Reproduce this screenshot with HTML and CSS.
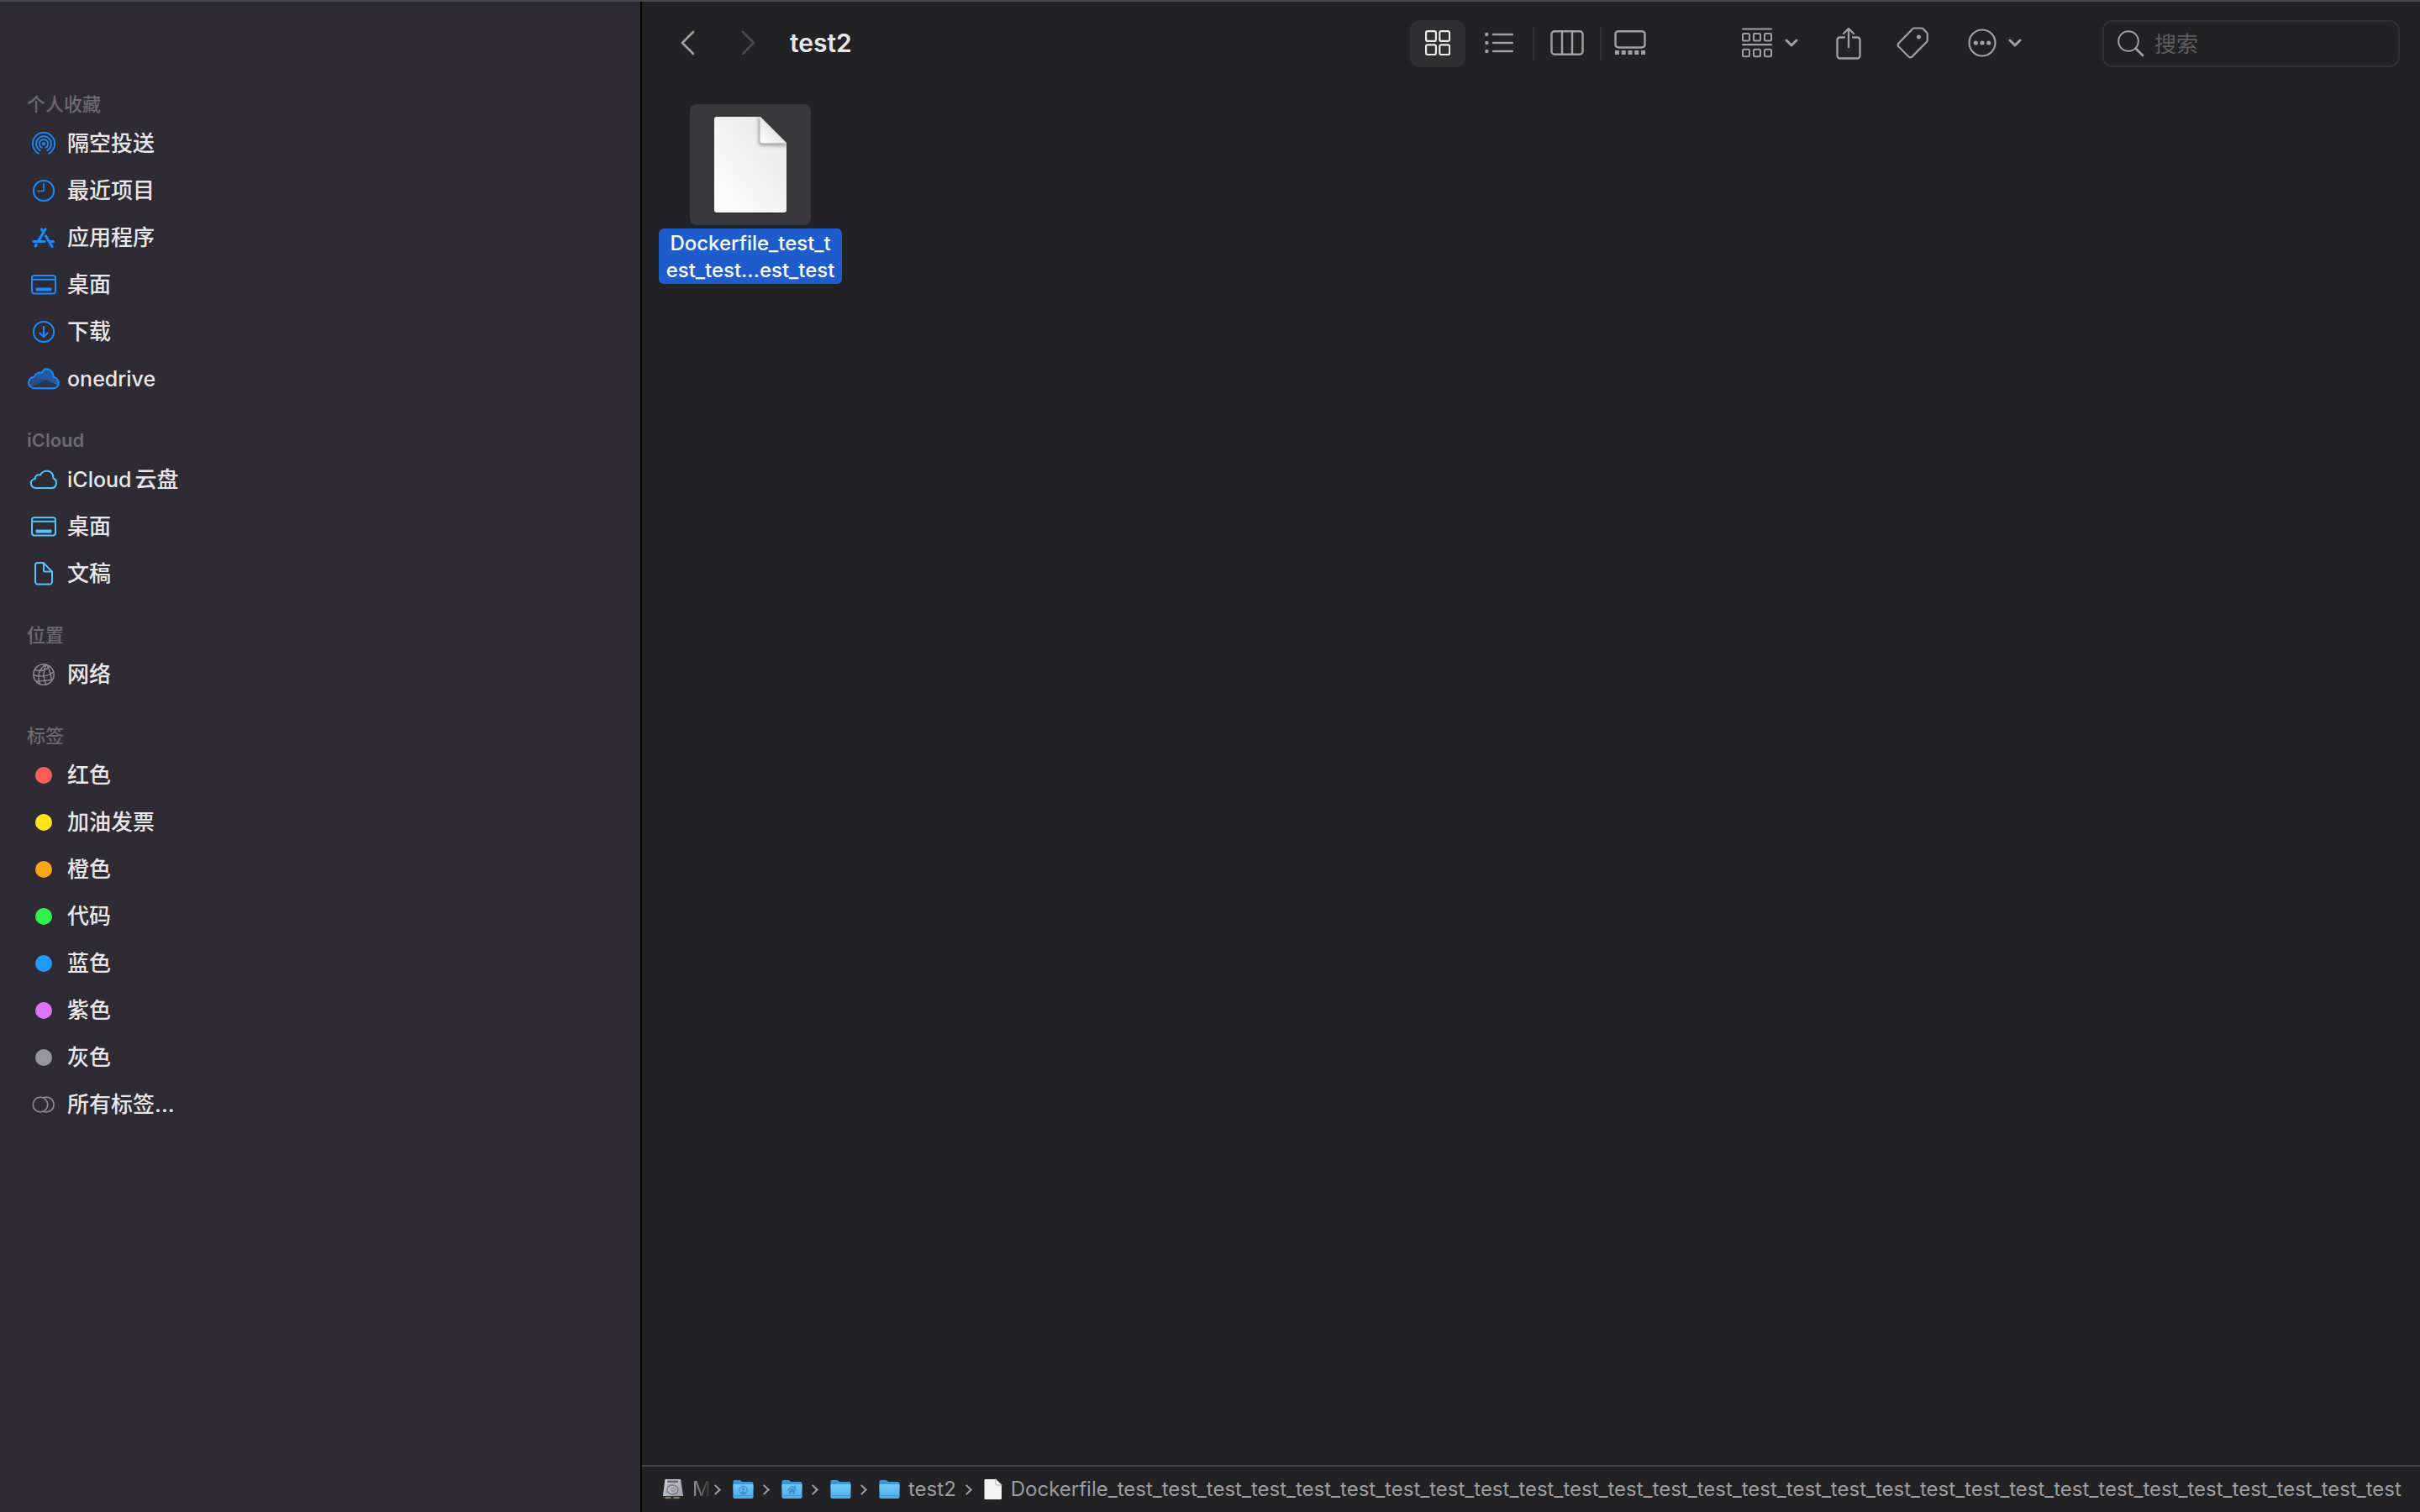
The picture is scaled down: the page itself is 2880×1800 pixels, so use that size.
FILE: index.html
```html
<!DOCTYPE html>
<html lang="zh-CN">
<head>
<meta charset="utf-8">
<meta name="viewport" content="width=device-width, initial-scale=1">
<title>test2</title>
<link rel="stylesheet" href="styles.css">
</head>
<body>
<svg class="defs" aria-hidden="true">
  <defs>
    <linearGradient id="folder-front" x1="0" y1="0" x2="0" y2="1">
      <stop offset="0" stop-color="#70cbfb"/><stop offset="1" stop-color="#4dabe6"/>
    </linearGradient>
    <linearGradient id="paper" x1="0" y1="1" x2="1" y2="0">
      <stop offset="0" stop-color="#ffffff"/><stop offset="1" stop-color="#e6e6e6"/>
    </linearGradient>
    <linearGradient id="fold" x1="0" y1="1" x2="0.7" y2="0.3">
      <stop offset="0" stop-color="#ffffff"/><stop offset="1" stop-color="#dedede"/>
    </linearGradient>
    <linearGradient id="disk" x1="0" y1="0" x2="1" y2="1">
      <stop offset="0" stop-color="#d0d7dc"/><stop offset="1" stop-color="#939ba1"/>
    </linearGradient>
    <filter id="fold-shadow" x="-50%" y="-50%" width="200%" height="200%">
      <feGaussianBlur stdDeviation="2"/>
    </filter>
    <clipPath id="page-clip"><path d="M3 1H55L86 32V112a3 3 0 0 1-3 3H3a3 3 0 0 1-3-3V4a3 3 0 0 1 3-3Z"/></clipPath>
    <symbol id="folder" viewBox="0 0 25 24">
      <path d="M.5 3q0-2 2-2H8q1 0 2 1t2 1H22.500q2 0 2 2V12H.5Z" fill="#3d97d3" stroke="none"/>
      <path d="M.5 7q0-1 1-1H23.500q1 0 1 1V21q0 2-2 2H2.500q-2 0-2-2Z" fill="url(#folder-front)" stroke="none"/>
      <path d="M.5 19.500H24.500" stroke="#3b96d2" stroke-width="1"/>
    </symbol>
    <symbol id="desktop" viewBox="0 0 30 24">
      <rect x="1" y="1" width="28" height="21.500" rx="3"/>
      <path d="M1 5.700H29"/>
      <rect x="5.500" y="15.500" width="19" height="4" rx="1" fill="currentColor" stroke="none"/>
    </symbol>
    <symbol id="small-chevron" viewBox="0 0 16 10">
      <path d="M2 2L8 8L14 2" stroke-width="3"/>
    </symbol>
  </defs>
</svg>

<div class="window">
  <nav class="sidebar" aria-label="边栏">
    <section class="group">
      <h2>个人收藏</h2>
      <ul>
        <li><a href="#airdrop"><span class="glyph"><svg width="28" height="28" viewBox="0 0 28 28"><path d="M7.800 25.600A13.100 13.100 0 1 1 20.200 25.600M9.700 22.100A9 9 0 1 1 18.300 22.100M11.500 18.700A5.200 5.200 0 1 1 16.500 18.700" stroke-width="1.800"/><circle cx="14" cy="14.200" r="2" fill="currentColor" stroke="none"/></svg></span>隔空投送</a></li>
        <li><a href="#recents"><span class="glyph"><svg width="28" height="28" viewBox="0 0 28 28"><circle cx="14" cy="14" r="12.100"/><path d="M14 6V14.500H7" stroke-width="1.600"/></svg></span>最近项目</a></li>
        <li><a href="#applications"><span class="glyph"><svg width="28" height="28" viewBox="0 0 28 28"><path d="M16 4L8 17.500M11.500 4L14 8.300M16.500 12L24 24.500M1.800 18.500H15M22 18.500H25.500M5.200 22.500L4.200 24" stroke-width="3.200"/></svg></span>应用程序</a></li>
        <li><a href="#desktop-folder"><span class="glyph"><svg width="30" height="24"><use href="#desktop"/></svg></span>桌面</a></li>
        <li><a href="#downloads"><span class="glyph"><svg width="28" height="28" viewBox="0 0 28 28"><circle cx="14" cy="14" r="12.100"/><path d="M14 8V19.500M9.500 15.500L14 20L18.500 15.500"/></svg></span>下载</a></li>
        <li><a href="#onedrive"><span class="glyph"><svg width="38" height="28" viewBox="0 0 38 28"><path d="M8.500 25.300C-1.500 25-1 12.500 7.500 11.700C9 7 14 5.500 17 7C18 -.5 29.500 .5 31 12C39 13.500 38.500 25.300 30.500 25.300Z" fill="#235ca6" stroke="none"/><path d="M1.500 20C0 15 4 11.700 8 11.700L21.500 15L4 23.500Z" fill="#264f88" stroke="none"/><path d="M4.500 23.500L21.500 15L35.500 21.500Q33.500 25 30 25.300H8.500Q6 25 4.500 23.500Z" fill="#28374f" stroke="none"/><path d="M8.500 25.300C-1.500 25-1 12.500 7.500 11.700C9 7 14 5.500 17 7C18 -.5 29.500 .5 31 12C39 13.500 38.500 25.300 30.500 25.300Z" stroke-width="1.900"/></svg></span><span class="latin">onedrive</span></a></li>
      </ul>
    </section>
    <section class="group cloud">
      <h2>iCloud</h2>
      <ul>
        <li><a href="#icloud-drive"><span class="glyph"><svg width="32" height="24" viewBox="0 0 32 24"><path d="M7.500 22C-1 21.500-1 11.500 6 11C5.500 7.500 8.500 5.500 12 6.500C15-.5 27.500-.5 27.500 10.500C33 12.500 31.500 22 25.500 22Z"/></svg></span><span><span class="latin spaced">iCloud</span>云盘</span></a></li>
        <li><a href="#icloud-desktop"><span class="glyph"><svg width="30" height="24"><use href="#desktop"/></svg></span>桌面</a></li>
        <li><a href="#documents"><span class="glyph"><svg width="22" height="28" viewBox="0 0 22 28"><path d="M4 1H10.500L21 11.500V23.500a3 3 0 0 1-3 3H4a3 3 0 0 1-3-3V4a3 3 0 0 1 3-3ZM11 1.500V10a1.500 1.500 0 0 0 1.500 1.500H20.500"/></svg></span>文稿</a></li>
      </ul>
    </section>
    <section class="group places">
      <h2>位置</h2>
      <ul>
        <li><a href="#network"><span class="glyph"><svg width="28" height="28" viewBox="0 0 28 28"><g stroke-width="1.500"><circle cx="14" cy="14" r="12.200"/><path d="M3.500 8.500Q13 12 21.500 4.500M2 14.500Q14 19 26 11M5 22Q14 22 24 20M17 2Q5 9 9 25M17 2Q11 14 17 26M17 2Q22 8 23.500 21"/></g></svg></span>网络</a></li>
      </ul>
    </section>
    <section class="group places">
      <h2>标签</h2>
      <ul>
        <li><a href="#red"><span class="glyph"><i class="dot red"></i></span>红色</a></li>
        <li><a href="#yellow"><span class="glyph"><i class="dot yellow"></i></span>加油发票</a></li>
        <li><a href="#orange"><span class="glyph"><i class="dot orange"></i></span>橙色</a></li>
        <li><a href="#green"><span class="glyph"><i class="dot green"></i></span>代码</a></li>
        <li><a href="#blue"><span class="glyph"><i class="dot blue"></i></span>蓝色</a></li>
        <li><a href="#purple"><span class="glyph"><i class="dot purple"></i></span>紫色</a></li>
        <li><a href="#gray"><span class="glyph"><i class="dot gray"></i></span>灰色</a></li>
        <li><a href="#all-tags"><span class="glyph"><svg width="28" height="20" viewBox="0 0 28 20"><circle cx="10" cy="10" r="8.800" stroke-width="1.700"/><path d="M14 1.800A8.800 8.800 0 1 1 14 18.200" stroke-width="1.700"/></svg></span>所有标签...</a></li>
      </ul>
    </section>
  </nav>

  <div class="browser">
    <header class="toolbar">
      <div class="history">
        <button type="button" aria-label="返回"><svg width="18" height="30" viewBox="0 0 18 30"><path d="M16 2L3 15L16 28" stroke-width="2.600"/></svg></button>
        <button type="button" aria-label="前进" disabled><svg width="18" height="30" viewBox="0 0 18 30"><path d="M2 2L15 15L2 28" stroke-width="2.600"/></svg></button>
      </div>
      <h1>test2</h1>
      <div class="tools">
        <div class="views">
          <button type="button" class="view-icons" aria-label="图标" aria-pressed="true"><svg width="30" height="30" viewBox="0 0 30 30"><g stroke-width="2.200"><rect x="1.100" y="1.100" width="11.800" height="11.800" rx="2"/><rect x="17.300" y="1.100" width="11.800" height="11.800" rx="2"/><rect x="1.100" y="17.300" width="11.800" height="11.800" rx="2"/><rect x="17.300" y="17.300" width="11.800" height="11.800" rx="2"/></g></svg></button>
          <button type="button" class="view-list" aria-label="列表"><svg width="34" height="26" viewBox="0 0 34 26"><path d="M10 3H33M10 13H33M10 23H33" stroke-width="2.400"/><g fill="currentColor" stroke="none"><circle cx="2.300" cy="3" r="2.200"/><circle cx="2.300" cy="13" r="2.200"/><circle cx="2.300" cy="23" r="2.200"/></g></svg></button>
          <button type="button" class="view-columns" aria-label="分栏"><svg width="40" height="30" viewBox="0 0 40 30"><rect x="1.500" y="1.200" width="37" height="27.600" rx="3.500" stroke-width="2.400"/><path d="M14 1V29M26 1V29" stroke-width="2.400"/></svg></button>
          <button type="button" class="view-gallery" aria-label="画廊"><svg width="38" height="30" viewBox="0 0 38 30"><rect x="1.500" y="1.200" width="35" height="19.300" rx="3.500" stroke-width="2.500"/><path d="M1 26.500H37" stroke-width="5" stroke-dasharray="5 2.750" stroke-linecap="butt"/></svg></button>
        </div>
        <button type="button" class="menu-button" aria-label="分组"><svg width="38" height="36" viewBox="0 0 38 36"><path d="M2 1.500H36M2 20.200H36" stroke-width="2.200"/><g stroke-width="2"><rect x="2" y="7" width="8" height="8.500" rx="1.500"/><rect x="15" y="7" width="8" height="8.500" rx="1.500"/><rect x="28" y="7" width="8" height="8.500" rx="1.500"/><rect x="2" y="25.700" width="8" height="8.500" rx="1.500"/><rect x="15" y="25.700" width="8" height="8.500" rx="1.500"/><rect x="28" y="25.700" width="8" height="8.500" rx="1.500"/></g></svg><svg width="16" height="10"><use href="#small-chevron"/></svg></button>
        <button type="button" class="tool" aria-label="共享"><svg width="30" height="42" viewBox="0 0 30 42"><path d="M10 14.500H4.500a3 3 0 0 0-3 3V36.500a3 3 0 0 0 3 3H25.500a3 3 0 0 0 3-3V17.500a3 3 0 0 0-3-3H20M15 26.500V5M9 10L15 4L21 10" stroke-width="2.300"/></svg></button>
        <button type="button" class="tool" aria-label="标签"><svg width="38" height="38" viewBox="0 0 38 38"><path d="M20.500 1.500H29.500Q31 1.500 32 2.500L35.800 6.500Q36.800 7.500 36.800 9V15.500Q36.800 17 35.800 18L18.500 35.500Q16.500 37.300 14.500 35.500L2.500 23.500Q.8 21.500 2.500 19.500L19 2.500Q19.600 1.500 20.500 1.500Z" stroke-width="2.200"/><circle cx="26.500" cy="12" r="2.500" fill="currentColor" stroke="none"/></svg></button>
        <button type="button" class="menu-button more" aria-label="更多"><svg width="34" height="34" viewBox="0 0 34 34"><circle cx="17" cy="17" r="15.500" stroke-width="2.200"/><g fill="currentColor" stroke="none"><circle cx="9.300" cy="17" r="2.600"/><circle cx="17" cy="17" r="2.600"/><circle cx="24.700" cy="17" r="2.600"/></g></svg><svg width="16" height="10"><use href="#small-chevron"/></svg></button>
        <label class="search">
          <svg width="32" height="32" viewBox="0 0 32 32"><circle cx="13" cy="13" r="11.800" stroke-width="2"/><path d="M22 22L30 30" stroke-width="2.800"/></svg>
          <input type="search" placeholder="搜索" aria-label="搜索">
        </label>
      </div>
    </header>

    <main class="files">
      <button type="button" class="file" aria-pressed="true">
        <span class="thumb">
          <svg width="86" height="116" viewBox="0 0 86 116">
            <path d="M3 2H55L86 33V113a3 3 0 0 1-3 3H3a3 3 0 0 1-3-3Z" fill="#1b1b1b" opacity=".6" stroke="none"/>
            <path d="M3 1H55L86 32V112a3 3 0 0 1-3 3H3a3 3 0 0 1-3-3V4a3 3 0 0 1 3-3Z" fill="url(#paper)" stroke="none"/>
            <g clip-path="url(#page-clip)" stroke="none"><path d="M53 0V31q0 4 4 4H88Z" fill="#777" opacity=".75" filter="url(#fold-shadow)"/></g>
            <path d="M54.500 1V29.500q0 3 3 3H86Z" fill="url(#fold)" stroke="none"/>
          </svg>
        </span>
        <span class="name">Dockerfile_test_t<br>est_test...est_test</span>
      </button>
    </main>

    <nav class="path" aria-label="路径">
      <ol>
        <li><a href="#disk-root"><svg width="26" height="26" viewBox="0 0 26 26"><path d="M3.500 1H22L25 20V24H1V20Z" fill="url(#disk)" stroke="none"/><path d="M1 21H25V24.500H1Z" fill="#2b2c2a" stroke="none"/><path d="M4 23H10M14 23H20" stroke="#a59a82" stroke-width="1.500"/><path d="M6 2.500H19V5H6Z" fill="#626b71" stroke="none"/><ellipse cx="12.500" cy="13.500" rx="6.500" ry="5.500" stroke="#6f797f" stroke-width="1.300"/><ellipse cx="13" cy="13.500" rx="2.500" ry="2" stroke="#7e888e" stroke-width="1"/><path d="M4.500 18L7 8L15 6.500" stroke="#899298" stroke-width="1"/></svg><span class="fading">M</span></a></li>
        <li><a href="#users" aria-label="用户"><svg width="25" height="24"><use href="#folder"/><g stroke="#3d8fcb"><circle cx="12.500" cy="13" r="4.700" stroke-width="1.300"/><circle cx="12.500" cy="11.700" r="1.800" fill="#3d8fcb" stroke="none"/><path d="M9.300 16Q12.500 12.500 15.700 16L12.500 17.500Z" fill="#3d8fcb" stroke="none"/></g></svg></a></li>
        <li><a href="#home" aria-label="个人"><svg width="25" height="24"><use href="#folder"/><path d="M7.500 13L12.500 8.500L17.500 13M16 8.500V11" stroke="#3d8fcb" stroke-width="1.500"/><path d="M9 13.300L12.500 10.500L16 13.300V18H13.500V15H11.500V18H9Z" fill="#3d8fcb" stroke="none"/></svg></a></li>
        <li><a href="#parent" aria-label="文件夹"><svg width="25" height="24"><use href="#folder"/></svg></a></li>
        <li><a href="#test2"><svg width="25" height="24"><use href="#folder"/></svg><span>test2</span></a></li>
        <li><a href="#file"><svg width="22" height="26" viewBox="0 0 22 26"><path d="M1.500 1H14L21 8V24q0 1-1 1H1.500q-1 0-1-1V2q0-1 1-1Z" fill="#f3f3f3" stroke="none"/><path d="M14 1V7q0 1 1 1H21Z" fill="#fff" stroke="#aaa" stroke-width="1"/></svg><span>Dockerfile_test_test_test_test_test_test_test_test_test_test_test_test_test_test_test_test_test_test_test_test_test_test_test_test_test_test_test_test_test</span></a></li>
      </ol>
    </nav>
  </div>
</div>
</body>
</html>
```
FILE: styles.css
```css
*, *::after {
  box-sizing: border-box;
}

body {
  margin: 0;
  background: #222224;
  color: #e8e7e9;
  font-family: Inter, "Noto Sans CJK SC", sans-serif;
  font-size: 26px;
  line-height: 32px;
}

h1, h2, ul, ol {
  margin: 0;
  padding: 0;
}

ul, ol {
  list-style: none;
}

a {
  color: inherit;
  text-decoration: none;
}

button {
  display: flex;
  align-items: center;
  justify-content: center;
  padding: 0;
  border: 0;
  background: none;
  color: inherit;
  font: inherit;
}

svg {
  display: block;
  flex: none;
  fill: none;
  stroke: currentColor;
  stroke-width: 2;
  stroke-linecap: round;
  stroke-linejoin: round;
}

.defs {
  position: absolute;
  width: 0;
  height: 0;
}

.window {
  display: flex;
  min-height: 100vh;
  border-top: 2px solid #48484a;
}

/* Sidebar */

.sidebar {
  flex: none;
  display: flex;
  flex-direction: column;
  gap: 26px;
  width: 764px;
  padding: 103px 32px 26px;
  border-right: 2px solid #000;
  background: #2f2b35;
}

.group h2 {
  height: 38px;
  color: #6c6971;
  font-size: 22px;
  font-weight: 500;
  line-height: 38px;
}

.group.cloud h2 {
  font-weight: 600;
}

.group a {
  display: flex;
  align-items: center;
  gap: 8px;
  height: 56px;
  font-weight: 500;
}

.latin {
  font-size: 25px;
}

.spaced {
  margin-right: 4px;
}

.glyph {
  display: flex;
  justify-content: center;
  width: 40px;
  color: #188bff;
}

.cloud .glyph {
  color: #53c4fc;
}

.places .glyph {
  color: #8b898d;
}

.dot {
  width: 20px;
  height: 20px;
  border-radius: 50%;
}

.red { background: #ff5f57; }
.yellow { background: #ffe41c; }
.orange { background: #ffa516; }
.green { background: #30f24b; }
.blue { background: #2299ff; }
.purple { background: #dd73ff; }
.gray { background: #9896a0; }

/* Toolbar */

.browser {
  flex: 1;
  display: flex;
  flex-direction: column;
  min-width: 0;
}

.toolbar {
  display: flex;
  align-items: center;
  height: 100px;
  padding: 0 24px 0 26px;
  color: #a1a1a3;
}

.toolbar button,
.toolbar h1 {
  padding-bottom: 2px;
}

.history {
  display: flex;
  gap: 17px;
}

.history button {
  width: 56px;
  height: 56px;
}

.history button:disabled {
  color: #4a4a4c;
}

.toolbar h1 {
  margin-left: 21px;
  color: #e8e8e9;
  font-size: 30px;
  font-weight: 600;
}

.tools {
  display: flex;
  align-items: center;
  gap: 20px;
  margin-left: auto;
}

.views {
  display: flex;
  align-items: center;
  margin-right: 66px;
}

.views button {
  height: 40px;
}

.views .view-icons {
  width: 66px;
  height: 56px;
  border-radius: 12px;
  background: #303032;
  color: #ececed;
}

.view-list {
  width: 80px;
}

.view-columns {
  width: 82px;
  border: solid #303032;
  border-width: 0 2px;
}

.view-gallery {
  width: 68px;
}

.tool {
  width: 56px;
  height: 56px;
}

.menu-button {
  gap: 14px;
  width: 92px;
  height: 56px;
}

.more {
  width: 100px;
}

.search {
  display: flex;
  align-items: center;
  gap: 12px;
  width: 354px;
  height: 56px;
  margin-left: 58px;
  padding: 0 16px;
  border: 2px solid #303032;
  border-radius: 12px;
}

.search input {
  flex: 1;
  min-width: 0;
  height: 40px;
  padding: 0;
  border: 0;
  outline: 0;
  background: none;
  color: #e8e8e9;
  font: inherit;
}

.search input::placeholder {
  color: #5d5d5f;
}

/* Files */

.files {
  flex: 1;
  padding: 22px 20px;
}

.file {
  flex-direction: column;
  gap: 4px;
  color: #fff;
}

.thumb {
  display: flex;
  align-items: center;
  justify-content: center;
  width: 144px;
  height: 144px;
  border-radius: 8px;
  background: #39393b;
}

.name {
  width: 218px;
  padding-top: 2px;
  border-radius: 6px;
  background: #1f5ccb;
  font-size: 24px;
  font-weight: 500;
  line-height: 32px;
  text-align: center;
  white-space: nowrap;
}

/* Path bar */

.path {
  height: 56px;
  padding: 0 0 0 24px;
  border-top: 2px solid #454547;
  color: #9d9d9f;
  font-size: 24px;
  font-weight: 400;
  overflow: hidden;
}

.path ol {
  display: flex;
  height: 54px;
}

.path li, .path a {
  display: flex;
  align-items: center;
}

.path a {
  gap: 10px;
}

.path li:not(:last-child)::after {
  content: "";
  width: 9px;
  height: 9px;
  margin: 0 16px 0 8px;
  border: solid #a1a1a3;
  border-width: 2px 2px 0 0;
  transform: rotate(45deg);
}

/* The disk name fades out under the separator that follows it. */
.path .fading {
  width: 20px;
  margin-right: -5px;
  mask-image: linear-gradient(to right, #000, transparent 120%);
}
```
